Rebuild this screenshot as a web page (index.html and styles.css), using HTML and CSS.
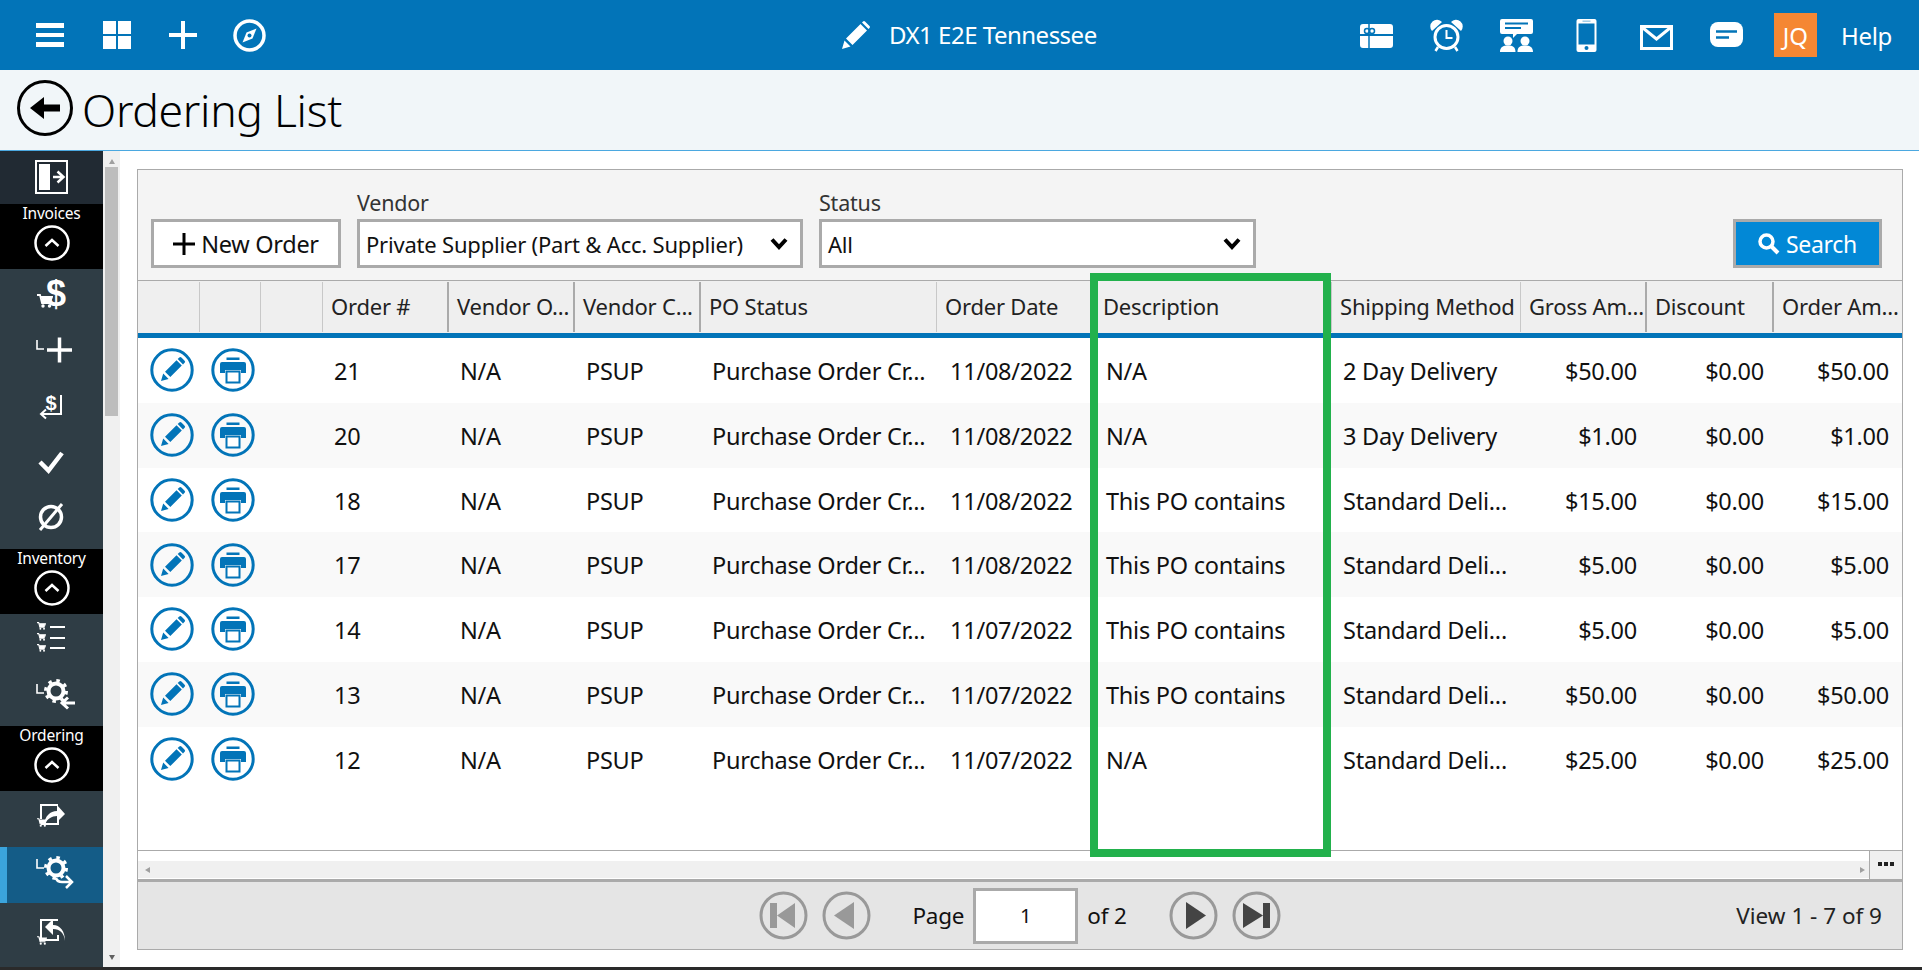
FILE: index.html
```html
<!DOCTYPE html>
<html lang="en">
<head>
<meta charset="utf-8">
<title>Ordering List</title>
<link rel="stylesheet" href="styles.css">
</head>
<body>
<svg class="defs" width="0" height="0" aria-hidden="true">
  <symbol id="pen" viewBox="0 0 44 44">
    <circle cx="22" cy="22" r="20.2" fill="none" stroke="currentColor" stroke-width="3"/>
    <path d="M11 33l2.2-7.500 5.400 5.400zM15 23.800L26.500 12.300l5.300 5.300L20.300 29.100z" fill="currentColor"/>
    <path d="M27.700 11.100l1.600-1.600a1.500 1.500 0 0 1 2.100 0l3.200 3.200a1.500 1.500 0 0 1 0 2.100l-1.600 1.600z" fill="currentColor"/>
  </symbol>
  <symbol id="print" viewBox="0 0 44 44">
    <circle cx="22" cy="22" r="20.2" fill="none" stroke="currentColor" stroke-width="3"/>
    <path d="M15.500 9.500h13v2.500h-13zM11 14h22a2 2 0 0 1 2 2v9h-5v-3H14v3H9v-9a2 2 0 0 1 2-2z" fill="currentColor"/>
    <rect x="15.500" y="23.500" width="13" height="11" fill="#fff" stroke="currentColor" stroke-width="2"/>
  </symbol>
  <symbol id="up" viewBox="0 0 36 36">
    <circle cx="18" cy="18" r="16.500" fill="none" stroke="#fff" stroke-width="2.500"/>
    <path d="M11.500 21l6.500-6 6.500 6" fill="none" stroke="#fff" stroke-width="2.500"/>
  </symbol>
  <symbol id="cart" viewBox="0 0 16 14">
    <path d="M0 1h3l2 8h8.500M3.500 3H15l-1.500 4H5" fill="none" stroke="#fff" stroke-width="1.800"/>
    <path d="M4 3h10.500L13 7H5z" fill="#fff"/>
    <circle cx="6" cy="12" r="1.700" fill="#fff"/><circle cx="12.500" cy="12" r="1.700" fill="#fff"/>
  </symbol>
  <symbol id="chev" viewBox="0 0 18 14">
    <path d="M2 2.500l7 7.500 7-7.500" fill="none" stroke="#000" stroke-width="4"/>
  </symbol>
</svg>

<div class="app">
  <header class="topbar">
    <nav class="top-left">
      <svg class="ti ti-first" viewBox="0 0 28 28"><path d="M0 2h28v5H0zM0 12h28v4H0zM0 21h28v5H0z" fill="#fff"/></svg>
      <svg class="ti" viewBox="0 0 28 28"><path d="M0 0h13v13H0zM15 0h13v13H15zM0 15h13v13H0zM15 15h13v13H15z" fill="#fff"/></svg>
      <svg class="ti" viewBox="0 0 28 28"><path d="M12 0h4v12h12v4H16v12h-4V16H0v-4h12z" fill="#fff"/></svg>
      <svg class="ti compass" viewBox="0 0 33 33"><circle cx="16.500" cy="16.500" r="14.500" fill="none" stroke="#fff" stroke-width="3.500"/><path d="M23.500 9.500L19.500 19.500 9.500 23.500 13.500 13.500z" fill="#fff"/><circle cx="16.500" cy="16.500" r="2" fill="#0274b8"/></svg>
    </nav>
    <div class="top-title">
      <svg class="pencil" viewBox="0 0 28 28"><path d="M0 28l2.500-8.500 6 6zM4 17.500L18.500 3l6.500 6.500L10.500 24zM20 1.500l1-1a1.500 1.500 0 0 1 2 0l4.500 4.500a1.500 1.500 0 0 1 0 2l-1 1z" fill="#fff"/></svg>
      <span>DX1 E2E Tennessee</span>
    </div>
    <nav class="top-right">
      <svg class="ri" viewBox="0 0 33 33"><path d="M3 5h27a3 3 0 0 1 3 3v7H0V8a3 3 0 0 1 3-3zM0 17h33v9a3 3 0 0 1-3 3H3a3 3 0 0 1-3-3z" fill="#fff"/><path d="M9 5v24" stroke="#0274b8" stroke-width="1.500"/><circle cx="7" cy="12" r="2.500" fill="none" stroke="#0274b8" stroke-width="1.500"/><circle cx="12" cy="12" r="2.500" fill="none" stroke="#0274b8" stroke-width="1.500"/></svg>
      <svg class="ri" viewBox="0 0 33 33"><circle cx="16.500" cy="18" r="11.500" fill="none" stroke="#fff" stroke-width="3"/><path d="M16.500 11v8h6" fill="none" stroke="#fff" stroke-width="2"/><path d="M2 12a6.500 6.500 0 0 1 10-9zM31 12a6.500 6.500 0 0 0-10-9z" fill="#fff"/><path d="M8 28l-2.500 4M25 28l2.500 4" stroke="#fff" stroke-width="2.500"/></svg>
      <svg class="ri" viewBox="0 0 33 33"><path d="M2 0h29a2 2 0 0 1 2 2v11a2 2 0 0 1-2 2H17l-4 4v-4H2a2 2 0 0 1-2-2V2a2 2 0 0 1 2-2z" fill="#fff"/><path d="M5 4.500h23M5 9h16" stroke="#0274b8" stroke-width="1.800"/><circle cx="8" cy="22" r="4.500" fill="#fff"/><circle cx="25" cy="22" r="4.500" fill="#fff"/><path d="M0 33c0-5 3-6.500 8-6.500s7.500 1.500 7.500 6.500zM17.500 33c0-5 2.500-6.500 7.500-6.500s8 1.500 8 6.500z" fill="#fff"/></svg>
      <svg class="ri" viewBox="0 0 33 33"><path d="M8.500 0h16a2 2 0 0 1 2 2v29a2 2 0 0 1-2 2h-16a2 2 0 0 1-2-2V2a2 2 0 0 1 2-2z" fill="#fff"/><rect x="8.500" y="4.500" width="16" height="21" fill="#0274b8"/><circle cx="16.500" cy="29" r="2" fill="#0274b8"/><path d="M12.500 2.200h8" stroke="#9fcbe6" stroke-width="1.500"/></svg>
      <svg class="ri" viewBox="0 0 33 33"><path d="M0 6h33v25H0z" fill="#fff"/><rect x="3" y="9" width="27" height="19" fill="#0274b8"/><path d="M3 9l13.500 11L30 9" fill="none" stroke="#fff" stroke-width="3"/></svg>
      <svg class="ri" viewBox="0 0 33 33"><rect x="0" y="3" width="33" height="25" rx="8" fill="#fff"/><path d="M6 12.500h21M6 18.500h13" stroke="#0274b8" stroke-width="2.500"/></svg>
      <span class="avatar">JQ</span>
      <span class="help">Help</span>
    </nav>
  </header>

  <div class="titlebar">
    <svg class="back" viewBox="0 0 56 56"><circle cx="28" cy="28" r="26.500" fill="none" stroke="#000" stroke-width="3"/><path d="M13 28l14-11v7.500h16v7H27V39z" fill="#000"/></svg>
    <h1 class="page-title">Ordering List</h1>
  </div>

  <div class="main">
    <aside class="sidebar">
      <div class="side-toggle">
        <svg class="side-svg" viewBox="0 0 103 53"><rect x="36" y="10" width="31" height="32" fill="none" stroke="#fff" stroke-width="2"/><rect x="39" y="13" width="11" height="26" fill="#fff"/><path d="M53 26h9M57.500 20.500l6 5.500-6 5.500" fill="none" stroke="#fff" stroke-width="2.500"/></svg>
      </div>

      <div class="group"><span class="group-name">Invoices</span><svg class="group-ic"><use href="#up"/></svg></div>
      <div class="item">
        <svg class="side-svg" viewBox="0 0 103 56"><text class="ic-dollar" x="56" y="37" text-anchor="middle">$</text><use href="#cart" x="37" y="25" width="16" height="14"/></svg>
      </div>
      <div class="item">
        <svg class="side-svg" viewBox="0 0 103 56"><path d="M37 15v9h7" fill="none" stroke="#fff" stroke-width="1.600"/><path d="M47 25h25M59.500 12.500v25" stroke="#fff" stroke-width="3.500"/></svg>
      </div>
      <div class="item">
        <svg class="side-svg" viewBox="0 0 103 56"><text class="ic-dollar-sm" x="51" y="29" text-anchor="middle">$</text><path d="M61 14v19H42M46 28.500l-5 4.500 5 4.500" fill="none" stroke="#fff" stroke-width="2"/></svg>
      </div>
      <div class="item">
        <svg class="side-svg" viewBox="0 0 103 56"><path d="M40 25l8.500 8.500L62 16" fill="none" stroke="#fff" stroke-width="4.500"/></svg>
      </div>
      <div class="item">
        <svg class="side-svg" viewBox="0 0 103 56"><circle cx="51" cy="24" r="10.500" fill="none" stroke="#fff" stroke-width="3.500"/><path d="M62 11L40 37" stroke="#fff" stroke-width="3"/></svg>
      </div>

      <div class="group"><span class="group-name">Inventory</span><svg class="group-ic"><use href="#up"/></svg></div>
      <div class="item">
        <svg class="side-svg" viewBox="0 0 103 56"><use href="#cart" x="37" y="8" width="9" height="8"/><use href="#cart" x="37" y="19" width="9" height="8"/><use href="#cart" x="37" y="30" width="9" height="8"/><path d="M50 13h15M50 24h15M50 34h15" stroke="#fff" stroke-width="2"/></svg>
      </div>
      <div class="item">
        <svg class="side-svg" viewBox="0 0 103 56"><path d="M37 14v9h7" fill="none" stroke="#fff" stroke-width="1.600"/><circle cx="56" cy="21" r="7.500" fill="none" stroke="#fff" stroke-width="4"/><circle cx="56" cy="21" r="10.500" fill="none" stroke="#fff" stroke-width="3" stroke-dasharray="3.500 4.750"/><path d="M75 33H63M68 27.500L62 33l6 5.500" fill="none" stroke="#fff" stroke-width="3"/></svg>
      </div>

      <div class="group"><span class="group-name">Ordering</span><svg class="group-ic"><use href="#up"/></svg></div>
      <div class="item">
        <svg class="side-svg" viewBox="0 0 103 56"><path d="M41 28V14h17M41 33h17v-7" fill="none" stroke="#fff" stroke-width="2"/><path d="M44 34c1-9 6-14 13-14v-6l8 9-8 8v-6c-5 0-10 3-13 9z" fill="#fff"/><use href="#cart" x="37" y="27" width="10" height="9"/></svg>
      </div>
      <div class="item item-active">
        <svg class="side-svg" viewBox="0 0 103 56"><path d="M37 12v9h7" fill="none" stroke="#fff" stroke-width="1.600"/><circle cx="56" cy="21" r="7.500" fill="none" stroke="#fff" stroke-width="4"/><circle cx="56" cy="21" r="10.500" fill="none" stroke="#fff" stroke-width="3" stroke-dasharray="3.500 4.750"/><path d="M56 31c1 3 3 4 6 4h8M66 29l6 6-6 6" fill="none" stroke="#fff" stroke-width="2.500"/></svg>
      </div>
      <div class="item item-last">
        <svg class="side-svg" viewBox="0 0 103 56"><path d="M41 32V13h17M41 33h17v-5" fill="none" stroke="#fff" stroke-width="2"/><path d="M65 34c-1-8-5-12-12-12v6l-8-8 8-8v6c7 0 12 6 12 16z" fill="#fff"/><use href="#cart" x="37" y="29" width="10" height="9"/></svg>
      </div>
    </aside>

    <div class="vscroll">
      <span class="arrow-up"></span>
      <div class="vtrack"><div class="vthumb"></div></div>
      <span class="arrow-down"></span>
    </div>

    <main class="content">
      <section class="panel">
        <div class="filters">
          <button class="btn-new"><svg class="plus" viewBox="0 0 22 22"><path d="M9.500 0h3v9.500H22v3h-9.500V22h-3v-9.500H0v-3h9.500z" fill="#000"/></svg>New Order</button>
          <div class="field field-vendor">
            <label class="field-label">Vendor</label>
            <div class="select"><span>Private Supplier (Part &amp; Acc. Supplier)</span><svg class="chev"><use href="#chev"/></svg></div>
          </div>
          <div class="field field-status">
            <label class="field-label">Status</label>
            <div class="select"><span>All</span><svg class="chev"><use href="#chev"/></svg></div>
          </div>
          <button class="btn-search"><svg class="mag" viewBox="0 0 22 22"><circle cx="8.500" cy="8.500" r="6.500" fill="none" stroke="#fff" stroke-width="3.500"/><path d="M13 13l7 7" stroke="#fff" stroke-width="4"/></svg>Search</button>
        </div>

        <div class="grid-row grid-head">
          <div class="th th-light"></div><div class="th th-light"></div><div class="th th-light"></div>
          <div class="th">Order #</div><div class="th">Vendor O...</div><div class="th">Vendor C...</div>
          <div class="th th-light">PO Status</div><div class="th th-light">Order Date</div><div class="th th-light">Description</div>
          <div class="th th-light">Shipping Method</div><div class="th">Gross Am...</div><div class="th">Discount</div><div class="th th-end">Order Am...</div>
        </div>

        <div class="grid-body">
          <div class="grid-row tr">
            <div class="td td-i"><svg class="act"><use href="#pen"/></svg></div><div class="td td-j"><svg class="act"><use href="#print"/></svg></div><div class="td"></div>
            <div class="td">21</div><div class="td">N/A</div><div class="td">PSUP</div><div class="td">Purchase Order Cr...</div><div class="td td-date">11/08/2022</div><div class="td">N/A</div><div class="td">2 Day Delivery</div><div class="td td-r">$50.00</div><div class="td td-r">$0.00</div><div class="td td-r td-end">$50.00</div>
          </div>
          <div class="grid-row tr">
            <div class="td td-i"><svg class="act"><use href="#pen"/></svg></div><div class="td td-j"><svg class="act"><use href="#print"/></svg></div><div class="td"></div>
            <div class="td">20</div><div class="td">N/A</div><div class="td">PSUP</div><div class="td">Purchase Order Cr...</div><div class="td td-date">11/08/2022</div><div class="td">N/A</div><div class="td">3 Day Delivery</div><div class="td td-r">$1.00</div><div class="td td-r">$0.00</div><div class="td td-r td-end">$1.00</div>
          </div>
          <div class="grid-row tr">
            <div class="td td-i"><svg class="act"><use href="#pen"/></svg></div><div class="td td-j"><svg class="act"><use href="#print"/></svg></div><div class="td"></div>
            <div class="td">18</div><div class="td">N/A</div><div class="td">PSUP</div><div class="td">Purchase Order Cr...</div><div class="td td-date">11/08/2022</div><div class="td">This PO contains</div><div class="td">Standard Deli...</div><div class="td td-r">$15.00</div><div class="td td-r">$0.00</div><div class="td td-r td-end">$15.00</div>
          </div>
          <div class="grid-row tr">
            <div class="td td-i"><svg class="act"><use href="#pen"/></svg></div><div class="td td-j"><svg class="act"><use href="#print"/></svg></div><div class="td"></div>
            <div class="td">17</div><div class="td">N/A</div><div class="td">PSUP</div><div class="td">Purchase Order Cr...</div><div class="td td-date">11/08/2022</div><div class="td">This PO contains</div><div class="td">Standard Deli...</div><div class="td td-r">$5.00</div><div class="td td-r">$0.00</div><div class="td td-r td-end">$5.00</div>
          </div>
          <div class="grid-row tr">
            <div class="td td-i"><svg class="act"><use href="#pen"/></svg></div><div class="td td-j"><svg class="act"><use href="#print"/></svg></div><div class="td"></div>
            <div class="td">14</div><div class="td">N/A</div><div class="td">PSUP</div><div class="td">Purchase Order Cr...</div><div class="td td-date">11/07/2022</div><div class="td">This PO contains</div><div class="td">Standard Deli...</div><div class="td td-r">$5.00</div><div class="td td-r">$0.00</div><div class="td td-r td-end">$5.00</div>
          </div>
          <div class="grid-row tr">
            <div class="td td-i"><svg class="act"><use href="#pen"/></svg></div><div class="td td-j"><svg class="act"><use href="#print"/></svg></div><div class="td"></div>
            <div class="td">13</div><div class="td">N/A</div><div class="td">PSUP</div><div class="td">Purchase Order Cr...</div><div class="td td-date">11/07/2022</div><div class="td">This PO contains</div><div class="td">Standard Deli...</div><div class="td td-r">$50.00</div><div class="td td-r">$0.00</div><div class="td td-r td-end">$50.00</div>
          </div>
          <div class="grid-row tr">
            <div class="td td-i"><svg class="act"><use href="#pen"/></svg></div><div class="td td-j"><svg class="act"><use href="#print"/></svg></div><div class="td"></div>
            <div class="td">12</div><div class="td">N/A</div><div class="td">PSUP</div><div class="td">Purchase Order Cr...</div><div class="td td-date">11/07/2022</div><div class="td">N/A</div><div class="td">Standard Deli...</div><div class="td td-r">$25.00</div><div class="td td-r">$0.00</div><div class="td td-r td-end">$25.00</div>
          </div>
        </div>

        <div class="hbar">
          <div class="htrack-wrap"><div class="htrack"><span class="arrow-left"></span><span class="arrow-right"></span></div></div>
          <div class="hmore"><i></i><i></i><i></i></div>
        </div>

        <div class="pager">
          <div></div>
          <div class="pager-mid">
            <svg class="pg" viewBox="0 0 49 49"><circle cx="24.500" cy="24.500" r="22.500" fill="none" stroke="#999" stroke-width="3"/><path d="M11 12h7v25h-7zM18 24.500L36 12v25z" fill="#999"/></svg>
            <svg class="pg pg-prev" viewBox="0 0 49 49"><circle cx="24.500" cy="24.500" r="22.500" fill="none" stroke="#999" stroke-width="3"/><path d="M12 24.500L32 11v27z" fill="#999"/></svg>
            <span class="pg-page">Page</span>
            <div class="pg-input">1</div>
            <span class="pg-of">of 2</span>
            <svg class="pg pg-next" viewBox="0 0 49 49"><circle cx="24.500" cy="24.500" r="22.500" fill="none" stroke="#999" stroke-width="3"/><path d="M37 24.500L17 11v27z" fill="#444"/></svg>
            <svg class="pg pg-last" viewBox="0 0 49 49"><circle cx="24.500" cy="24.500" r="22.500" fill="none" stroke="#999" stroke-width="3"/><path d="M38 12h-7v25h7zM31 24.500L11 12v25z" fill="#444"/></svg>
          </div>
          <div class="pg-view">View 1 - 7 of 9</div>
        </div>
      </section>
    </main>
  </div>
  <div class="bottom-strip"></div>
  <div class="highlight"></div>
</div>
</body>
</html>
```

FILE: styles.css
```css
* { box-sizing: border-box; }
html, body { margin: 0; padding: 0; background: #fff; overflow: hidden; }
body { font-family: "Noto Sans", "Open Sans", sans-serif; color: #111; }
.defs { position: absolute; }

.app { position: relative; width: 1919px; height: 970px; display: flex; flex-direction: column; }

.topbar { height: 70px; background: #0274b8; display: flex; align-items: center; padding: 0 27px 0 36px; color: #fff; flex: none; }
.top-left { display: flex; align-items: center; gap: 38px; }
.ti { width: 28px; height: 28px; display: block; }
.ti-first { margin-right: 1px; }
.compass { width: 33px; height: 33px; margin-left: -2px; }
.top-title { display: flex; align-items: center; margin-left: 576px; font-size: 24px; gap: 19px; letter-spacing: -0.5px; }
.top-title span { margin-bottom: 2px; }
.pencil { width: 28px; height: 28px; }
.top-right { margin-left: auto; display: flex; align-items: center; gap: 37px; }
.ri { width: 33px; height: 33px; display: block; }
.avatar { width: 43px; height: 44px; margin-left: -6px; background: #f58733; color: #fff; font-size: 24px; display: flex; align-items: center; justify-content: center; }
.help { margin-left: -13px; font-size: 24px; letter-spacing: -0.3px; }

.titlebar { height: 81px; background: #f1f6f9; border-bottom: 1px solid #4ba8e0; display: flex; align-items: center; padding-left: 17px; gap: 9px; flex: none; }
.back { width: 56px; height: 56px; margin-bottom: 5px; }
.page-title { margin: 0 0 2px; font-size: 44.500px; font-weight: 300; color: #000; letter-spacing: -0.3px; }

.main { flex: 1; min-height: 0; display: flex; }
.sidebar { width: 103px; flex: none; background: #2f3d45; display: flex; flex-direction: column; }
.side-toggle { height: 53px; background: #212a33; }
.side-svg { display: block; width: 103px; height: 100%; }
.group { height: 65px; background: #000; color: #fff; display: flex; flex-direction: column; align-items: center; }
.group-name { font-size: 15.500px; line-height: 18px; letter-spacing: -0.2px; }
.group-ic { width: 36px; height: 36px; margin-top: 3px; }
.item { height: 56px; }
.item-active { background: #145c87; border-left: 7px solid #3ba4dc; }
.item-active .side-svg { margin-left: -7px; }
.item-last { flex: 1; }
.ic-dollar { font: 700 36px "Liberation Sans", sans-serif; fill: #fff; }
.ic-dollar-sm { font: 700 20px "Liberation Sans", sans-serif; fill: #fff; }

.vscroll { width: 17px; flex: none; background: #f0f0f0; display: flex; flex-direction: column; align-items: center; }
.vtrack { flex: 1; width: 100%; padding: 0 2px; }
.vthumb { height: 249px; background: #bdbdbd; }
.arrow-up { flex: none; margin: 8px 0 3px; width: 0; height: 0; border: 3.500px solid transparent; border-top-width: 0; border-bottom: 5px solid #a0a0a0; }
.arrow-down { flex: none; margin: 0 0 7px; width: 0; height: 0; border: 3.500px solid transparent; border-bottom-width: 0; border-top: 5px solid #606060; }

.content { flex: 1; min-width: 0; padding: 18px 0 0 17px; }
.panel { width: 1766px; height: 781px; border: 1px solid #aaa; display: flex; flex-direction: column; background: #fff; }

.filters { height: 111px; flex: none; background: #f4f4f4; border-bottom: 1px solid #aaa; display: flex; align-items: flex-end; padding: 0 20px 12px 13px; gap: 16px; }
.btn-new { width: 190px; height: 49px; border: 3px solid #aaa; background: #fff; font: inherit; font-size: 23.500px; color: #111; display: flex; align-items: center; justify-content: center; gap: 6px; padding: 0; letter-spacing: -0.3px; }
.plus { width: 22px; height: 22px; }
.field { display: flex; flex-direction: column; }
.field-vendor { width: 446px; }
.field-status { width: 437px; }
.field-label { font-size: 21.500px; line-height: 28px; color: #333; margin-bottom: 2px; letter-spacing: -0.2px; }
.select { height: 49px; border: 3px solid #aaa; background: #fff; display: flex; align-items: center; justify-content: space-between; padding: 0 12px 0 6px; font-size: 22px; color: #111; white-space: nowrap; letter-spacing: -0.2px; }
.chev { width: 18px; height: 14px; flex: none; }
.btn-search { margin-left: auto; width: 149px; height: 49px; border: 3px solid #aaa; background: #0288d6; color: #fff; font: inherit; font-size: 23px; display: flex; align-items: center; justify-content: center; gap: 6px; padding: 0; letter-spacing: -0.3px; }
.mag { width: 22px; height: 22px; }

.grid-row { display: grid; grid-template-columns: 62px 61px 62px 126px 126px 126px 236px 158px 237px 189px 126px 127px 1fr; }
.grid-head { height: 57px; flex: none; background: #efefef; border-bottom: 5px solid #0274b8; padding-top: 1px; }
.th { font-size: 22px; line-height: 49px; height: 50px; padding-left: 8px; white-space: nowrap; overflow: hidden; border-right: 2px solid #aaa; color: #222; letter-spacing: -0.2px; }
.th-light { border-right: 1px solid #c8c8c8; }
.th-end { border-right: 0; }

.grid-body { height: 512px; flex: none; }
.tr { height: 64.750px; }
.tr:nth-child(even) { background: #f9f9f9; }
.td { font-size: 23.500px; line-height: 66px; padding-left: 11px; white-space: nowrap; overflow: hidden; color: #111; letter-spacing: -0.25px; }
.td-i { padding-left: 12px; display: flex; align-items: center; }
.td-j { padding-left: 11px; display: flex; align-items: center; }
.td-date { padding-left: 13px; }
.td-r { text-align: right; padding: 0 10px 0 0; }
.td-end { padding-right: 13px; }
.act { width: 44px; height: 44px; color: #0274b8; display: block; }

.hbar { height: 29px; flex: none; border-top: 1px solid #aaa; display: flex; }
.htrack-wrap { flex: 1; padding-top: 10px; background: #fff; }
.htrack { height: 17px; background: #f0f0f0; display: flex; justify-content: space-between; align-items: center; padding: 0 4px 0 7px; }
.arrow-left { width: 0; height: 0; border: 3.500px solid transparent; border-left-width: 0; border-right: 5px solid #a0a0a0; }
.arrow-right { width: 0; height: 0; border: 3.500px solid transparent; border-right-width: 0; border-left: 5px solid #a0a0a0; }
.hmore { width: 33px; background: #f0f0f0; border-left: 1px solid #aaa; display: flex; gap: 2px; justify-content: center; align-items: center; padding-bottom: 2px; }
.hmore i { width: 4px; height: 4px; background: #222; }

.pager { flex: 1; min-height: 0; border-top: 3px solid #aaa; background: #e5e5e5; display: grid; grid-template-columns: 1fr auto 1fr; align-items: center; }
.pager-mid { display: flex; align-items: center; }
.pg { width: 49px; height: 49px; display: block; }
.pg-prev { margin-left: 14px; }
.pg-page { margin-left: 41px; font-size: 22.500px; color: #111; letter-spacing: -0.2px; }
.pg-input { margin-left: 9px; width: 105px; height: 56px; border: 3px solid #aaa; background: #fff; font-size: 20px; display: flex; align-items: center; justify-content: center; }
.pg-of { margin-left: 9px; font-size: 22.500px; color: #111; letter-spacing: -0.2px; }
.pg-next { margin-left: 42px; }
.pg-last { margin-left: 14px; }
.pg-view { justify-self: end; padding-right: 20px; font-size: 22.500px; color: #222; }

.bottom-strip { height: 3px; flex: none; background: #2a2a2a; margin-right: -3px; }

.highlight { position: absolute; left: 1090px; top: 273px; width: 241px; height: 584px; border: 8px solid #22b14c; pointer-events: none; }
```
